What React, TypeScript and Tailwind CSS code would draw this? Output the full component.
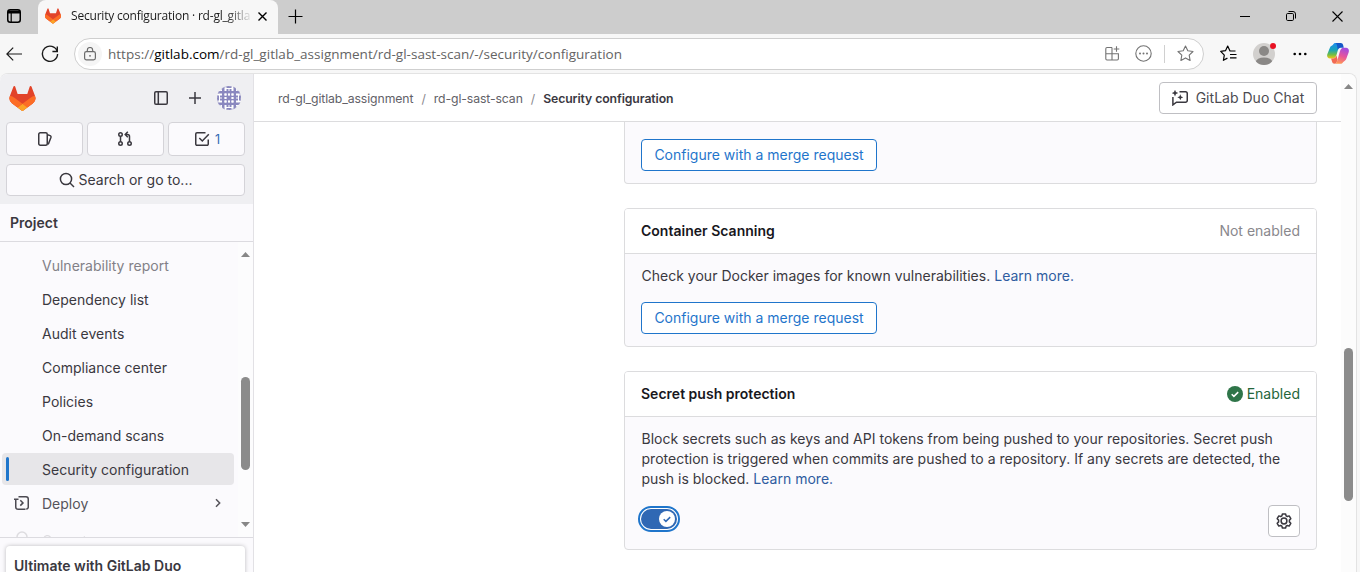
import React from "react";

type IconProps = { className?: string };

const Tanuki = ({ className = "" }: IconProps) => (
  <svg viewBox="0 0 25 24" className={className}>
    <path fill="#E24329" d="m24.507 9.5-.034-.09L21.082.562a.896.896 0 0 0-1.694.091l-2.29 7.01H7.825L5.535.653a.898.898 0 0 0-1.694-.09L.451 9.411.416 9.5a6.297 6.297 0 0 0 2.09 7.278l.012.01.03.022 5.16 3.867 2.56 1.935 1.554 1.176a1.051 1.051 0 0 0 1.268 0l1.555-1.176 2.56-1.935 5.197-3.89.014-.01A6.297 6.297 0 0 0 24.507 9.5Z" />
    <path fill="#FC6D26" d="m24.507 9.5-.034-.09a11.44 11.44 0 0 0-4.56 2.051l-7.447 5.632 4.742 3.584 5.197-3.89.014-.01A6.297 6.297 0 0 0 24.507 9.5Z" />
    <path fill="#FCA326" d="m7.707 20.677 2.56 1.935 1.555 1.176a1.051 1.051 0 0 0 1.268 0l1.555-1.176 2.56-1.935-4.743-3.584-4.755 3.584Z" />
    <path fill="#FC6D26" d="M5.01 11.461a11.43 11.43 0 0 0-4.56-2.05L.416 9.5a6.297 6.297 0 0 0 2.09 7.278l.012.01.03.022 5.16 3.867 4.745-3.584-7.444-5.632Z" />
  </svg>
);

const Line = ({ className = "", w = 16, h = 16, sw = 1.5, children }: { className?: string; w?: number; h?: number; sw?: number; children: React.ReactNode }) => (
  <svg width={w} height={h} viewBox={`0 0 ${w} ${h}`} fill="none" stroke="currentColor" strokeWidth={sw} className={"shrink-0 " + className}>
    {children}
  </svg>
);

const Identicon = () => (
  <svg width="24" height="24" viewBox="0 0 24 24" className="shrink-0">
    <defs>
      <clipPath id="avatarClip"><circle cx="12" cy="12" r="12" /></clipPath>
    </defs>
    <g clipPath="url(#avatarClip)">
      <rect width="24" height="24" fill="#fff" />
      <g fill="#8a88bf">
        <path d="M5 0h2.500v24H5zM9.500 3h2v18h-2zM12.500 3h2v18h-2zM16.500 0H19v24h-2.500zM0 5h24v2.500H0zM3 9.500h18v2H3zM3 12.500h18v2H3zM0 16.500h24V19H0z" />
        <path d="M9.500 0h5v2h-5zM9.500 22h5v2h-5zM0 9.500h2v5H0zM22 9.500h2v5h-2zM10.500 10.500h3v3h-3z" />
      </g>
      <g fill="#fff">
        <path d="M7.500 7.500h2v2h-2zM11 7.500h2v2h-2zM14.500 7.500h2v2h-2zM7.500 11h2v2h-2zM14.500 11h2v2h-2zM7.500 14.500h2v2h-2zM11 14.500h2v2h-2zM14.500 14.500h2v2h-2z" />
      </g>
    </g>
    <circle cx="12" cy="12" r="11.600" fill="none" stroke="#a9a7cb" strokeWidth="0.700" strokeDasharray="3 1.5" />
  </svg>
);

const Copilot = () => (
  <svg width="22" height="21" viewBox="0 0 22 21" className="shrink-0">
    <defs>
      <linearGradient id="cpA" x1="0" y1="0" x2="0" y2="1">
        <stop offset="0" stopColor="#1f8df0" /><stop offset="0.45" stopColor="#18a5b8" /><stop offset="0.75" stopColor="#72bd45" /><stop offset="1" stopColor="#f5c814" />
      </linearGradient>
      <linearGradient id="cpB" x1="0.6" y1="0" x2="0.3" y2="1">
        <stop offset="0" stopColor="#a14be0" /><stop offset="0.5" stopColor="#e8559b" /><stop offset="1" stopColor="#ff9a52" />
      </linearGradient>
    </defs>
    <path fill="url(#cpA)" d="M6 1.800C6.600.6 7.300 0 8.500 0H15c-1.800.3-2.500 1.300-3 3L9.800 11c-.8 2.800-1.800 4.500-4 4.500H3C.6 15.500-.3 13.600.3 11.300L3 4.600C3.600 3 4.800 2.800 6 1.800Z" />
    <path fill="#1558c8" d="M8.500 0h5.200c1.400 0 2.100.8 2.400 2l.7 2.800h-2.900c-1.800 0-2.600.9-3.100 2.400l-.7-4.200C9.800 1.400 9.500.4 8.500 0Z" />
    <path fill="url(#cpB)" d="M16 19.200c-.6 1.100-1.400 1.600-2.600 1.600H8c1.300-.5 1.800-1.500 2.300-3.200l2.200-7.900c.7-2.800 1.700-4.900 4-4.900H19c2.400 0 3.300 2.100 2.700 4.400L19.200 16c-.6 1.700-2 2.200-3.200 3.200Z" />
    <path fill="#f26a52" d="M5.800 15.500c2.300 0 3.200-1.600 3.700-3.200l1 4.300c-.6 2.500-1.200 4.200-3 4.200-1.500 0-2-.8-2.400-2l-1-3.300Z" />
  </svg>
);

const Triangle = ({ down = false }: { down?: boolean }) => (
  <svg width="9" height="5" viewBox="0 0 9 5" className="shrink-0">
    <path d={down ? "M0 0h9L4.500 5z" : "M0 5h9L4.500 0z"} fill="#878787" />
  </svg>
);

const TitleBar = () => (
  <div className="flex h-[34px] bg-[#cdcdcd]">
    <div className="flex w-[38px] items-center justify-center rounded-br-[8px] bg-[#cdcdcd] pr-[10px] pb-[2px]">
      <Line w={14} h={14} className="text-black">
        <rect x="0.75" y="0.75" width="12.500" height="12.500" rx="2.500" />
        <path d="M1 3h12" strokeWidth="3" />
        <path d="M4.200 3v10" strokeWidth="1.200" />
      </Line>
    </div>
    <div className="flex w-[240px] items-center rounded-t-[8px] bg-[#f7f7f7] pb-[2px] pl-[7px]">
      <Tanuki className="h-[16px] w-[16px] shrink-0" />
      <span className="ml-[10px] w-[179px] overflow-hidden font-['Open_Sans',sans-serif] text-[12px] leading-[18px] tracking-[-0.200px] whitespace-nowrap text-[#1b1b1b] [mask-image:linear-gradient(to_right,black_155px,transparent_182px)]">
        Security configuration · rd-gl_gitla
      </span>
      <Line w={9} h={9} sw={1.4} className="ml-[8px] text-black"><path d="M.5.5l8 8M8.500.5l-8 8" /></Line>
    </div>
    <div className="flex flex-1 items-center rounded-bl-[8px] bg-[#cdcdcd] pb-[2px] pl-[10px] text-black">
      <Line w={15} h={15} sw={1.2}><path d="M7.500.5v14M.5 7.500h14" /></Line>
      <div className="ml-auto flex items-center pr-[17px]">
        <Line w={10} h={10} sw={1}><path d="M0 5.500h10" /></Line>
        <Line w={10} h={10} sw={1} className="ml-[36px]">
          <rect x="0.500" y="2.500" width="7" height="7" rx="1.200" />
          <path d="M2.500.5H7A2.500 2.500 0 0 1 9.500 3v4.500" />
        </Line>
        <Line w={11} h={11} sw={1.1} className="ml-[36px]"><path d="M.5.5l10 10M10.500.5l-10 10" /></Line>
      </div>
    </div>
  </div>
);

const AddressBar = () => (
  <div className="flex h-[39px] items-center bg-[#f7f7f7] text-[#1b1b1b]">
    <Line w={16} h={14} sw={1.2} className="ml-[6px]"><path d="M16 7H1M7.200.6.900 7l6.300 6.400" /></Line>
    <Line w={18} h={18} sw={1.4} className="ml-[19px]">
      <path d="M16.200 6.300A7.600 7.600 0 1 0 16.600 9M16.300 1.600v4.900h-4.900" />
    </Line>
    <div className="ml-[15px] flex h-[32px] w-[1130px] items-center rounded-full border border-[#cfcfcf] bg-white pl-[3px]">
      <div className="flex h-6 w-6 items-center justify-center rounded-full bg-[#f5f5f5] text-[#6b6b6b]">
        <Line w={12} h={14} sw={1.2}>
          <rect x="0.600" y="4.600" width="10.800" height="8.300" rx="1.800" />
          <path d="M3.300 4.500V3.200a2.700 2.700 0 0 1 5.400 0v1.300" />
          <circle cx="6" cy="8.800" r="0.900" fill="currentColor" stroke="none" />
        </Line>
      </div>
      <span className="ml-[6px] pt-[2px] font-['Open_Sans',sans-serif] text-[13.500px] tracking-[0.010px] whitespace-nowrap text-[#646464]">
        https://<span className="text-black">gitlab.com</span>/rd-gl_gitlab_assignment/rd-gl-sast-scan/-/security/configuration
      </span>
      <div className="ml-auto flex items-center pr-[9px] text-[#737373]">
        <Line w={15} h={15} sw={1.1} className="relative left-px">
          <path d="M7 1.500H2A1.200 1.200 0 0 0 .8 2.700v10.100A1.200 1.200 0 0 0 2 14h10.200a1.200 1.200 0 0 0 1.200-1.200V7.800H.8M7 1.500V14M11.500.2v5.600M8.700 3h5.600" />
        </Line>
        <Line w={17} h={17} sw={1.1} className="ml-[16px]">
          <circle cx="8.500" cy="8.500" r="7.700" />
          <g fill="currentColor" stroke="none"><circle cx="5" cy="8.500" r="1" /><circle cx="8.500" cy="8.500" r="1" /><circle cx="12" cy="8.500" r="1" /></g>
        </Line>
        <div className="mr-[12px] ml-[12px] h-[18px] w-px bg-[#d0d0d0]" />
        <Line w={17} h={17} sw={1.1}>
          <path strokeLinejoin="round" d="m8.500 1 2.300 4.800 5.200.7-3.800 3.700.9 5.300-4.600-2.600-4.600 2.600.9-5.300L1 6.500l5.200-.7z" />
        </Line>
      </div>
    </div>
    <Line w={17} h={17} sw={1.200} className="ml-[16px] text-black">
      <path strokeLinejoin="round" d="M15.500 6H10L7.700 1 5.500 5.700.7 6.400l3.600 3.700-.9 5.200 4-2.200M10 9.500h6.500M10 12.800h6.500" />
    </Line>
    <div className="relative ml-[16px] h-[22px] w-[22px] shrink-0">
      <svg width="22" height="22" viewBox="0 0 22 22">
        <defs><clipPath id="who"><circle cx="11" cy="11" r="11" /></clipPath></defs>
        <circle cx="11" cy="11" r="11" fill="#d2d0ce" />
        <g fill="#8a8886" clipPath="url(#who)"><circle cx="11" cy="8" r="5" /><ellipse cx="11" cy="19" rx="8.200" ry="4.600" /></g>
      </svg>
      <span className="absolute top-0 right-[-1px] h-[6px] w-[6px] rounded-full bg-[#e81123]" />
    </div>
    <svg width="14" height="4" viewBox="0 0 14 4" className="ml-[18px] shrink-0 fill-black"><circle cx="1.700" cy="2" r="1.300" /><circle cx="7" cy="2" r="1.300" /><circle cx="12.300" cy="2" r="1.300" /></svg>
    <div className="ml-[20px]"><Copilot /></div>
  </div>
);

const Shortcut = ({ children }: { children: React.ReactNode }) => (
  <div className="flex h-[34px] flex-1 items-center justify-center rounded-[4px] border border-[#d4d3d8] bg-[#fbfafd]">{children}</div>
);

const NavItem = ({ label, active = false, faded = false }: { label: string; active?: boolean; faded?: boolean }) => (
  <div className={"mb-[2px] flex h-8 w-[232px] items-center rounded-[4px] pl-[4px] " + (active ? "bg-[#e7e6e9]" : "")}>
    <span className={"h-6 w-[3px] rounded-full " + (active ? "bg-[#1f75cb]" : "")} />
    <span className={"ml-[33px] " + (faded ? "text-[#828087]" : "text-[#3a383f]")}>{label}</span>
  </div>
);

const Sidebar = () => (
  <aside className="flex w-[254px] shrink-0 flex-col border-r border-[#e2e1e5] bg-[#fbfafd] text-[14px] tracking-[0.010px] text-[#3a383f]">
    <div className="flex h-[130px] shrink-0 flex-col bg-[#efeff2] pr-[8px] pl-[6px]">
      <div className="flex h-12 items-center pr-[4px] pl-[3px]">
        <Tanuki className="h-[25px] w-[27px]" />
        <Line className="ml-auto">
          <rect x="1.750" y="1.750" width="12.500" height="12.500" rx="1.250" /><path d="M5.300 2v12" />
        </Line>
        <Line w={12} h={12} className="ml-[20px]"><path d="M6 0v12M0 6h12" /></Line>
        <div className="ml-[16px]"><Identicon /></div>
      </div>
      <div className="flex gap-[4px]">
        <Shortcut>
          <Line>
            <rect x="1.750" y="1.750" width="8.500" height="12.500" rx="1.500" />
            <path strokeLinejoin="round" d="M10.500 3.700 13.200 4.600c.7.300 1 .9.800 1.600L11.700 12.300l-1.200 1" />
          </Line>
        </Shortcut>
        <Shortcut>
          <Line className="-ml-px">
            <circle cx="3.500" cy="3.500" r="1.750" /><circle cx="3.500" cy="12.500" r="1.750" /><circle cx="12.500" cy="12.500" r="1.750" />
            <path d="M3.500 5.200v5.600M12.500 10.800V5.500a2 2 0 0 0-2-2H8.500M10.800.8 8.200 3.500l2.600 2.700" />
          </Line>
        </Shortcut>
        <Shortcut>
          <Line className="ml-[1px]">
            <path d="M11.500 1.750H3A1.250 1.250 0 0 0 1.750 3v10A1.250 1.250 0 0 0 3 14.250h10A1.250 1.250 0 0 0 14.250 13V8.500M5.300 7l3 3 6.500-6.800" />
          </Line>
          <span className="ml-[5px] pt-[2px] text-[12.500px] text-[#2f68b4]">1</span>
        </Shortcut>
      </div>
      <div className="mt-[8px] flex h-8 items-center justify-center rounded-[4px] border border-[#d4d3d8] bg-[#fbfafd]">
        <Line className="ml-px"><circle cx="7" cy="7" r="5.600" /><path d="m11 11 4 4" /></Line>
        <span className="ml-[3px] pb-px">Search or go to...</span>
      </div>
    </div>
    <div className="flex h-[38px] shrink-0 items-center border-b border-[#dcdbe0] pl-[10px] font-semibold">Project</div>
    <div className="flex h-[296px] shrink-0 border-b border-[#dcdbe0]">
      <div className="flex-1 overflow-hidden pt-[7px] pl-[2px]">
        <NavItem label="Vulnerability report" faded />
        <NavItem label="Dependency list" />
        <NavItem label="Audit events" />
        <NavItem label="Compliance center" />
        <NavItem label="Policies" />
        <NavItem label="On-demand scans" />
        <NavItem label="Security configuration" active />
        <div className="mb-[2px] flex h-8 w-[232px] items-center pl-[12px]">
          <Line className="text-[#4c4a52]">
            <path d="M1.750 8.500V4.250M0 4.250H4.500M4.500 1.750H12A2.250 2.250 0 0 1 14.250 4v5M1.750 8v4A2.250 2.250 0 0 0 4 14.250h7.500M14.250 9V11.500a2 2 0 0 1-2 2.500M6.300 5.200 9 7.900l-2.700 2.700" />
          </Line>
          <span className="ml-[12px] text-[#55535a]">Deploy</span>
          <Line w={8} h={10} className="mr-[12px] ml-auto text-[#55535a]"><path d="m2 1.200 3.700 3.800L2 8.800" /></Line>
        </div>
        <div className="flex h-8 w-[232px] items-center pl-[12px] opacity-15">
          <Line><circle cx="8" cy="8" r="5" /></Line>
          <span className="ml-[12px] pt-[6px]">Operate</span>
        </div>
      </div>
      <div className="flex w-[15px] shrink-0 flex-col items-center bg-[#fcfcfd] pt-[10px] pb-[10px]">
        <Triangle />
        <div className="mt-[120px] h-[93px] w-[9px] rounded-full bg-[#8b8b8b]" />
        <div className="mt-auto flex"><Triangle down /></div>
      </div>
    </div>
    <div className="flex-1 overflow-hidden pt-[8px] pr-[8px] pl-[6px]">
      <div className="h-[80px] rounded-[4px] bg-white pt-[10px] pl-[8px] leading-5 font-semibold shadow-[0_0_4px_rgba(5,5,6,0.25)]">Ultimate with GitLab Duo</div>
    </div>
  </aside>
);

const MrButton = () => (
  <button className="flex h-8 w-[236px] items-center justify-center rounded-[4px] border border-[#1f75cb] bg-white text-[14px] tracking-normal text-[#1f75cb]">
    <span className="whitespace-nowrap">Configure with a merge request</span>
  </button>
);

const Breadcrumbs = () => (
  <div className="flex h-12 shrink-0 items-center border-b border-[#dcdcde] pr-[24px] pl-[24px] text-[12.250px] tracking-[-0.100px] whitespace-nowrap text-[#626168]">
    <div className="flex pt-[2px]">
      <span>rd-gl_gitlab_assignment</span>
      <span className="mx-[8px] text-[#89888d]">/</span>
      <span>rd-gl-sast-scan</span>
      <span className="mx-[8px] text-[#89888d]">/</span>
      <span className="font-semibold text-[#3a383f]">Security configuration</span>
    </div>
    <button className="ml-auto flex h-8 w-[158px] items-center justify-center rounded-[4px] border border-[#bfbfc3] bg-white text-[14px] tracking-[0.020px] text-[#4c4b51]">
      <Line className="text-[#3a383f]">
        <path d="M7.500 1.750H13.500A1.750 1.750 0 0 1 15.250 3.500v7A1.750 1.750 0 0 1 13.500 12.250H4.500L.9 14.900V7" />
        <path fill="currentColor" stroke="none" d="m3 -.2 1 2.300 2.300 1L4 4.100 3 6.400 2 4.100-.3 3.100 2 2.100zM8.300 4.300l.9 2.100 2.100.9-2.100.9-.9 2.100-.9-2.100-2.100-.9 2.100-.9z" />
      </Line>
      <span className="ml-[8px]">GitLab Duo Chat</span>
    </button>
  </div>
);

const CardHead = ({ title, children }: { title: string; children: React.ReactNode }) => (
  <div className="flex h-[45px] items-center justify-between border-b border-[#dcdcde] bg-white px-4">
    <span className="font-semibold text-[#18171d]">{title}</span>
    {children}
  </div>
);

const cardClass = "overflow-hidden rounded-[4px] border border-[#dcdcde] bg-[#fbfafd]";

const Main = () => (
  <main className="flex min-w-0 flex-1 flex-col bg-white text-[14px] leading-5 tracking-[0.012px] text-[#3a383f]">
    <Breadcrumbs />
    <div className="flex-1 overflow-hidden pr-[24px] pl-[370px]">
      <div className="h-[62px] rounded-b-[4px] border border-t-0 border-[#dcdcde] bg-[#fbfafd] px-4 pt-[17px]">
        <MrButton />
      </div>
      <section className={"mt-6 h-[139px] " + cardClass}>
        <CardHead title="Container Scanning"><span className="text-[#89888d]">Not enabled</span></CardHead>
        <div className="px-4 pt-3">
          <p className="pl-[0.500px]">Check your Docker images for known vulnerabilities. <a className="text-[#2f5ca0]">Learn more.</a></p>
          <div className="mt-4"><MrButton /></div>
        </div>
      </section>
      <section className={"mt-6 h-[179px] " + cardClass}>
        <CardHead title="Secret push protection">
          <span className="flex items-center text-[#24663b]">
            <svg width="16" height="16" viewBox="0 0 16 16" className="mr-[4px]"><circle cx="8" cy="8" r="8" fill="#2f7549" /><path d="m4.700 8.300 2.200 2.100 4.300-4.300" fill="none" stroke="#fff" strokeWidth="1.500" /></svg>
            Enabled
          </span>
        </CardHead>
        <div className="px-4 pt-3">
          <p className="pl-[0.500px] whitespace-nowrap">
            Block secrets such as keys and API tokens from being pushed to your repositories. Secret push<br />
            protection is triggered when commits are pushed to a repository. If any secrets are detected, the<br />
            push is blocked. <a className="text-[#2f5ca0]">Learn more.</a>
          </p>
          <div className="mt-[16px] flex items-start justify-between">
            <div className="mt-[1px] -ml-[3px] flex h-[26px] w-[42px] rounded-full border-2 border-[#1f75cb] bg-white p-px">
              <div className="flex flex-1 items-center justify-end rounded-full bg-[#2f68b4] pr-[2px]">
                <svg width="16" height="16" viewBox="0 0 16 16"><circle cx="8" cy="8" r="8" fill="#fff" /><path d="m4.700 8.300 2.200 2.100 4.300-4.300" fill="none" stroke="#2f68b4" strokeWidth="1.500" /></svg>
              </div>
            </div>
            <button className="flex h-8 w-8 items-center justify-center rounded-[4px] border border-[#bfbfc3] bg-white text-[#3a383f]">
              <Line>
                <path strokeLinejoin="round" d="M6.400.9h3.200l.5 1.900 1.200.7 1.900-.6 1.600 2.800-1.400 1.400v1.800l1.400 1.400-1.600 2.800-1.900-.6-1.200.7-.5 1.900H6.400l-.5-1.900-1.200-.7-1.900.6-1.600-2.800 1.400-1.400V7.100L1.200 5.700l1.600-2.800 1.900.6 1.200-.7z" />
                <circle cx="8" cy="8" r="2.900" />
              </Line>
            </button>
          </div>
        </div>
      </section>
    </div>
  </main>
);

export default function App() {
  return (
    <div className="flex h-[572px] w-[1360px] flex-col overflow-hidden bg-[#f7f7f7] font-['Inter',sans-serif]">
      <TitleBar />
      <AddressBar />
      <div className="flex min-h-0 w-[1357px] flex-1 overflow-hidden rounded-t-[8px] border-t border-r border-[#e3e3e3]">
        <Sidebar />
        <Main />
        <div className="flex w-[15px] shrink-0 flex-col items-center bg-[#fcfcfc] pt-[10px]">
          <Triangle />
          <div className="mt-[259px] h-[153px] w-[9px] rounded-full bg-[#8b8b8b]" />
        </div>
      </div>
    </div>
  );
}
